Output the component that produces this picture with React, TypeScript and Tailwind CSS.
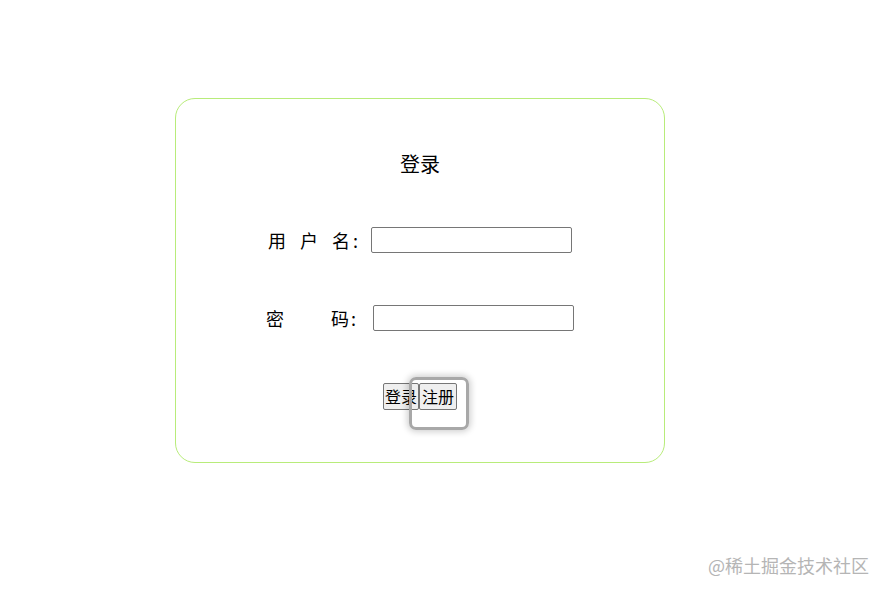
export default function App() {
  const font = { fontFamily: '"Microsoft YaHei", "Noto Sans CJK SC", sans-serif' };
  return (
    <div className="relative w-[887px] h-[593px] bg-white overflow-hidden text-black" style={font}>
      <div className="ml-[175px] mt-[98px] w-[490px] h-[365px] border border-[#b8ec7a] rounded-[20px] flex flex-col items-center pt-[51px]">
        <h1 className="text-[20px] leading-[28px] font-normal">登录</h1>

        <div className="mt-[49px] flex items-center h-[26px]">
          <span className="text-[18px] leading-[26px] flex items-center">
            <span>用</span>
            <span className="ml-[14px]">户</span>
            <span className="ml-[14px]">名</span>
            <span className="ml-[3px]">:</span>
          </span>
          <input className="ml-[13px] w-[201px] h-[26px] border border-[#767676] rounded-[2px] bg-white" />
        </div>

        <div className="mt-[52px] flex items-center h-[26px]">
          <span className="text-[18px] leading-[26px] flex items-center">
            <span>密</span>
            <span className="ml-[47px]">码</span>
            <span className="ml-[2px]">:</span>
          </span>
          <input className="ml-[17px] w-[201px] h-[26px] border border-[#767676] rounded-[2px] bg-white" />
        </div>

        <div className="mt-[52px] flex relative">
          <button className="h-[27px] px-[1px] text-[16px] leading-[23px] bg-[#efefef] border border-[#767676] rounded-[2px]">
            登录
          </button>
          <button className="h-[27px] px-[2px] text-[16px] leading-[23px] bg-[#efefef] border border-[#767676] rounded-[2px]">
            注册
          </button>
          <div className="absolute left-[26px] top-[-6px] w-[60px] h-[53px] border-[3px] border-[#a8a8a8] rounded-[7px] shadow-[0_0_6px_2px_rgba(0,0,0,0.18)] pointer-events-none" />
        </div>
      </div>

      <div className="absolute right-[18px] top-[552px] text-[18px] leading-[26px] text-[#b5b5b5]">
        @稀土掘金技术社区
      </div>
    </div>
  );
}
